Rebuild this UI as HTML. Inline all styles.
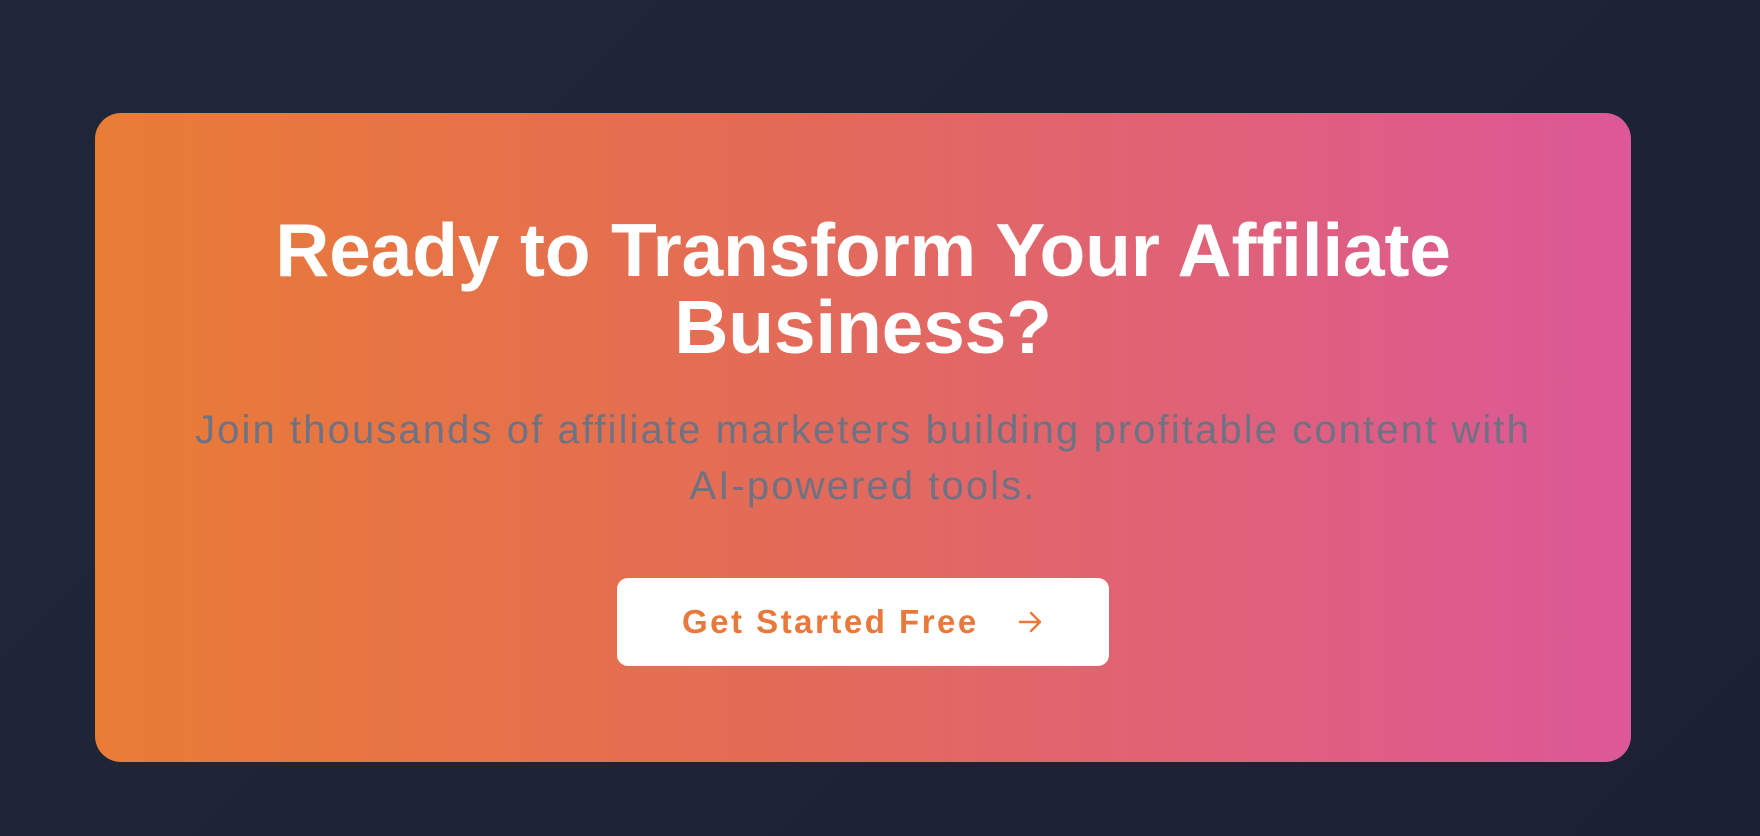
<!DOCTYPE html>
<html><head><style>
html,body{margin:0;padding:0}
body{width:1760px;height:836px;background:linear-gradient(135deg,#1f2739,#1a2133);position:relative;overflow:hidden;font-family:"Liberation Sans",sans-serif}
.card{position:absolute;left:95px;top:113px;width:1536px;height:649px;border-radius:26px;background:linear-gradient(90deg,#e97c35 0%,#e36b58 45%,#dc5898 100%)}
h1{position:absolute;left:95px;width:1536px;top:212px;margin:0;text-align:center;color:#fff;font-weight:700;font-size:75px;line-height:77px;letter-spacing:-0.2px}
p{position:absolute;left:95px;width:1536px;top:402px;margin:0;text-align:center;color:#6e7283;font-size:40px;line-height:56px;letter-spacing:2.1px}
.btn{position:absolute;left:617px;top:578px;width:492px;height:88px;background:#fff;border-radius:11px}
.btn span{position:absolute;left:65px;top:25px;color:#e9793a;font-weight:700;font-size:33px;line-height:38px;white-space:nowrap;letter-spacing:2.5px}
.btn svg{position:absolute;left:400px;top:31px}
</style></head><body>
<div class="card"></div>
<h1>Ready to Transform Your Affiliate<br>Business?</h1>
<p>Join thousands of affiliate marketers building profitable content with<br>AI-powered tools.</p>
<div class="btn"><span>Get Started Free</span>
<svg width="26" height="26" viewBox="0 0 26 26"><path d="M3 13H23M14 4L23 13L14 22" stroke="#e9793a" stroke-width="2.4" fill="none" stroke-linecap="round" stroke-linejoin="round"/></svg></div>
</body></html>
